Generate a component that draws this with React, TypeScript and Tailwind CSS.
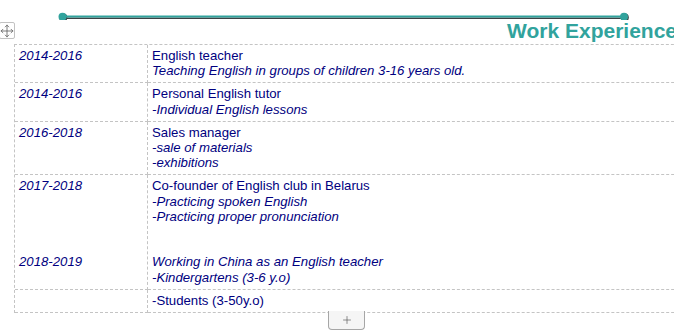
import React from "react";
import { Move, Plus } from "lucide-react";

const Blank = () => <div>&nbsp;</div>;

export default function App() {
  const cell1 =
    "border-r border-b border-dashed border-[#c4c4c4] pl-[4px] pt-[3px] pb-[4px] italic";
  const cell2 =
    "border-r border-b border-dashed border-[#c4c4c4] pl-[4px] pt-[3px] pb-[4px]";
  return (
    <div className="relative w-[674px] h-[334px] overflow-hidden bg-white font-['Liberation_Sans',Arial,sans-serif]">
      {/* header */}
      <div className="h-[20px]">
        <svg width="674" height="20" className="block">
          <line x1="63" y1="18.3" x2="625" y2="18.3" stroke="#3b4346" strokeWidth="1.6" />
          <circle cx="63.3" cy="17.6" r="4" fill="#3b4346" />
          <circle cx="624.8" cy="17.6" r="4" fill="#3b4346" />
          <line x1="62" y1="16.6" x2="624" y2="16.6" stroke="#31a39d" strokeWidth="2" />
          <circle cx="62.5" cy="16.7" r="4" fill="#31a39d" />
          <circle cx="624" cy="16.7" r="4" fill="#31a39d" />
        </svg>
      </div>
      <div className="h-[24px] leading-[22px] pl-[507px] whitespace-nowrap text-[21px] font-bold text-[#31a39d]">
        Work Experience
      </div>

      {/* table */}
      <div className="ml-[14px] w-[700px] grid grid-cols-[133px_1fr] border-t border-l border-dashed border-[#c4c4c4] text-[13.2px] leading-[15.2px] text-[#000080]">
        <div className={cell1}>2014-2016</div>
        <div className={cell2}>
          <div>English teacher</div>
          <div className="italic">Teaching English in groups of children 3-16 years old.</div>
        </div>

        <div className={cell1}>2014-2016</div>
        <div className={cell2}>
          <div>Personal English tutor</div>
          <div className="italic">-Individual English lessons</div>
        </div>

        <div className={cell1}>2016-2018</div>
        <div className={cell2}>
          <div>Sales manager</div>
          <div className="italic">-sale of materials</div>
          <div className="italic">-exhibitions</div>
        </div>

        <div className={cell1}>
          <div>2017-2018</div>
          <Blank />
          <Blank />
          <Blank />
          <Blank />
          <div>2018-2019</div>
          <Blank />
        </div>
        <div className={cell2}>
          <div>Co-founder of English club in Belarus</div>
          <div className="italic">-Practicing spoken English</div>
          <div className="italic">-Practicing proper pronunciation</div>
          <Blank />
          <Blank />
          <div className="italic">Working in China as an English teacher</div>
          <div className="italic">-Kindergartens (3-6 y.o)</div>
        </div>

        <div className={cell1}>&nbsp;</div>
        <div className={cell2}>
          <div>-Students (3-50y.o)</div>
        </div>
      </div>

      {/* move handle */}
      <div className="absolute left-[-1px] top-[22px] w-[16px] h-[17px] border border-[#c2c2c2] rounded-[2px] bg-white flex items-center justify-center">
        <Move size={14} strokeWidth={1.3} color="#555555" />
      </div>

      {/* add row button */}
      <div className="absolute left-[328px] top-[311px] w-[37px] h-[19px] border border-t-0 border-[#a6a6a6] rounded-b-[4px] bg-[#f5f5f5] flex items-center justify-center">
        <Plus size={12} strokeWidth={1.3} color="#555555" />
      </div>
    </div>
  );
}
